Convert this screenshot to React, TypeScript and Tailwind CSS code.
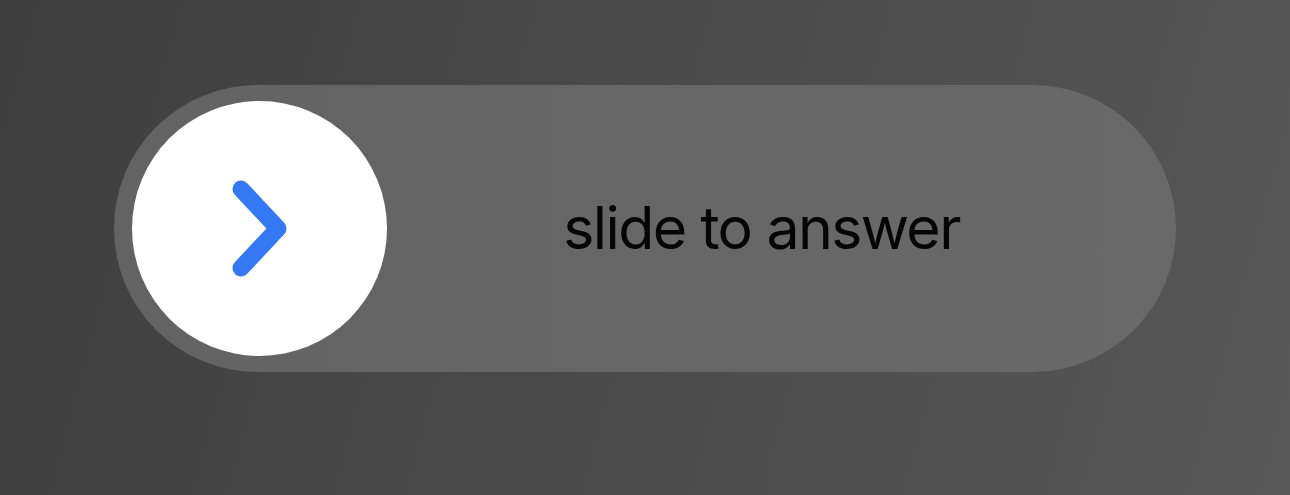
export default function App() {
  return (
    <div className="w-[1290px] h-[495px] bg-linear-[105deg] from-[#3e3e3e] to-[#575757] pt-[85px] pl-[114px]">
      {/* Answer slider track */}
      <div className="flex items-center w-[1062px] h-[287px] rounded-full bg-gradient-to-r from-[#636363] to-[#696969] pl-[18px]">
        {/* Knob */}
        <div className="flex items-center justify-center w-[255px] h-[255px] rounded-full bg-white shrink-0">
          <svg width="255" height="255" viewBox="0 0 255 255">
            <path
              d="M109 88 L146 127.5 L109 167"
              fill="none"
              stroke="#3478f6"
              strokeWidth="17"
              strokeLinecap="round"
              strokeLinejoin="round"
            />
          </svg>
        </div>
        <div className="flex-1 flex justify-center pr-[40px]">
          <span
            className="text-[59px] text-[#050505] tracking-[-1.6px]"
            style={{ fontFamily: "Inter, 'Noto Sans', sans-serif" }}
          >
            slide to answer
          </span>
        </div>
      </div>
    </div>
  );
}
